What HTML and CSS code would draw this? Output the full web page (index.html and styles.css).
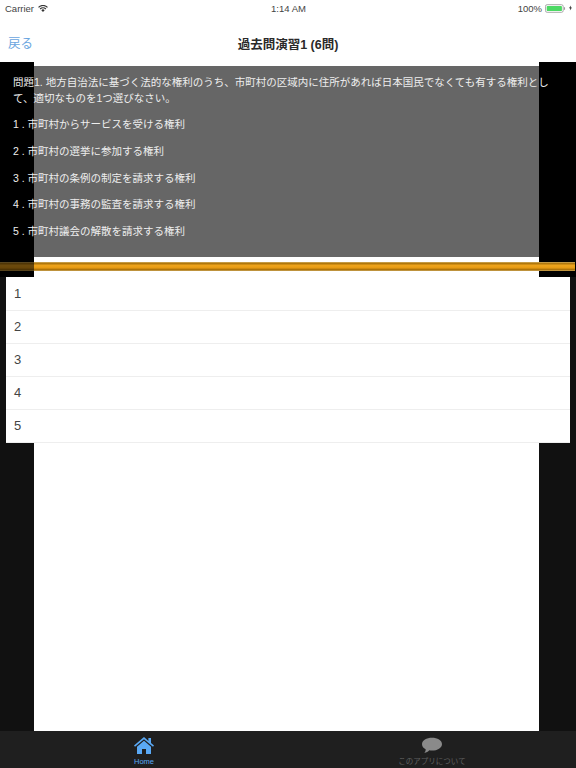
FILE: index.html
```html
<!DOCTYPE html>
<html lang="ja">
<head>
<meta charset="utf-8">
<title>過去問演習1</title>
<link rel="stylesheet" href="styles.css">
</head>
<body>
<div class="app">
  <div class="status">
    <div class="status-left"><span>Carrier</span>
      <svg class="wifi" viewBox="0 0 14 10"><path d="M7 10 4.600 7.400a3.400 3.400 0 0 1 4.800 0ZM3.500 6.300 2.300 5a6.700 6.700 0 0 1 9.400 0l-1.200 1.300a5 5 0 0 0-7 0ZM1.200 3.900 0 2.700a10 10 0 0 1 14 0l-1.200 1.200a8.300 8.300 0 0 0-11.600 0Z"/></svg>
    </div>
    <div class="status-time">1:14 AM</div>
    <div class="status-right"><span>100%</span>
      <svg class="battery" viewBox="0 0 26 10"><rect x=".5" y=".5" width="21" height="9" rx="2" fill="none" stroke="#999"/><rect x="2" y="2" width="18" height="6" rx="1" fill="#4cd964"/><rect x="22.500" y="3.500" width="1.200" height="3" fill="#999"/></svg>
      <svg class="bolt" viewBox="0 0 5 8"><path d="M3 0 0 4.500h2L1.500 8 5 3.200H3Z"/></svg>
    </div>
  </div>
  <div class="nav">
    <span class="back">戻る</span>
    <span class="title">過去問演習1 (6問)</span>
  </div>
  <div class="content">
    <div class="side side-left"></div>
    <div class="side side-right"></div>
    <div class="block block-left"></div>
    <div class="block block-right"></div>
    <div class="question">
      <p class="q-text">問題1. 地方自治法に基づく法的な権利のうち、市町村の区域内に住所があれば日本国民でなくても有する権利として、適切なものを1つ選びなさい。</p>
      <p>1 . 市町村からサービスを受ける権利</p>
      <p>2 . 市町村の選挙に参加する権利</p>
      <p>3 . 市町村の条例の制定を請求する権利</p>
      <p>4 . 市町村の事務の監査を請求する権利</p>
      <p>5 . 市町村議会の解散を請求する権利</p>
    </div>
    <div class="divider"><div class="gold"></div></div>
    <ul class="answers">
      <li>1</li>
      <li>2</li>
      <li>3</li>
      <li>4</li>
      <li>5</li>
    </ul>
  </div>
  <div class="tabbar">
    <div class="tab tab-active">
      <svg class="tab-icon" viewBox="0 0 20 17"><path fill="#5aa9f5" d="M10 0 0 8.600l1 1.200L10 2.200l9 7.600 1-1.200-3-2.600V1h-2.600v3L10 0Z"/><path fill="#5aa9f5" d="M10 3.800 3 9.700V17h5v-5h4v5h5V9.700L10 3.800Z"/></svg>
      <span>Home</span>
    </div>
    <div class="tab">
      <svg class="tab-icon" viewBox="0 0 22 17"><path fill="#8a8a8a" d="M11 0C5 0 0 2.900 0 7c0 2.400 1.600 4.300 4 5.500.2 1.500-.5 3-1.500 4.200 2.300-.3 4.300-1.400 5.500-2.900 1 .2 2 .2 3 .2 6 0 11-3 11-7S17 0 11 0Z"/></svg>
      <span>このアプリについて</span>
    </div>
  </div>
</div>
</body>
</html>
```
FILE: styles.css
```css
* { box-sizing: border-box; }
html, body { margin: 0; padding: 0; }
body { background: #fff; font-family: "Liberation Sans", "Noto Sans CJK JP", sans-serif; }
.app { width: 576px; height: 768px; display: flex; flex-direction: column; overflow: hidden; }
.status { height: 16px; display: grid; grid-template-columns: 1fr auto 1fr; align-items: center; padding: 0 4px 0 5px; font-size: 9.500px; color: #444; }
.status-left { display: flex; align-items: center; gap: 4px; }
.wifi { width: 10px; height: 7px; fill: #333; }
.status-right { display: flex; align-items: center; justify-content: flex-end; gap: 3px; }
.battery { width: 22px; height: 9px; }
.bolt { width: 3px; height: 6px; fill: #333; margin-left: -1px; }
.nav { height: 46px; position: relative; display: flex; align-items: center; justify-content: center; padding-top: 12px; }
.back { position: absolute; left: 8px; top: 19px; font-size: 12.500px; line-height: 18px; color: #6aa5e0; }
.title { font-size: 12.500px; font-weight: 700; color: #2a2a2a; line-height: 18px; }
.content { flex: 1; position: relative; display: flex; flex-direction: column; padding-top: 4px; }
.side { position: absolute; top: 0; bottom: 0; background: #111; }
.side-left { left: 0; width: 34px; }
.side-right { right: 0; width: 37px; }
.block { position: absolute; top: 0; height: 215px; background: #000; z-index: 1; }
.block-left { left: 0; width: 34px; }
.block-right { right: 0; width: 37px; }
.question { position: relative; height: 191px; background: #666; padding: 8px 13px 0; color: #eee; font-size: 10.500px; line-height: 16px; }
.question p { margin: 0 0 10.750px; position: relative; z-index: 2; }
.question .q-text { margin-bottom: 10px; }
.divider { position: relative; height: 20px; background: #fff; padding-top: 5px; }
.gold { position: relative; z-index: 2; height: 9px; margin-right: 1px; background: linear-gradient(#d8b56a 0, #a8720c 14%, #f0a51c 40%, #e59a14 65%, #a06a08 88%, #d8b56a 100%); }
.gold::before { content: ""; position: absolute; left: 0; top: 0; bottom: 0; width: 34px; background: rgba(0, 0, 0, .55); }
.answers { position: relative; z-index: 1; list-style: none; margin: 0 6px; padding: 1px 0 0; background: #fff; }
.answers li { height: 33px; padding: 0 0 2px 8px; display: flex; align-items: center; font-size: 13px; color: #444; border-bottom: 1px solid #eee; }
.tabbar { height: 37px; background: #1f1f1f; display: flex; position: relative; z-index: 3; }
.tab { flex: 1; display: flex; flex-direction: column; align-items: center; padding-top: 6px; color: #5f5f5f; font-size: 7.500px; line-height: 9px; }
.tab-active { color: #5aa9f5; }
.tab-icon { width: 20px; height: 17px; display: block; margin-bottom: 3px; }
```
